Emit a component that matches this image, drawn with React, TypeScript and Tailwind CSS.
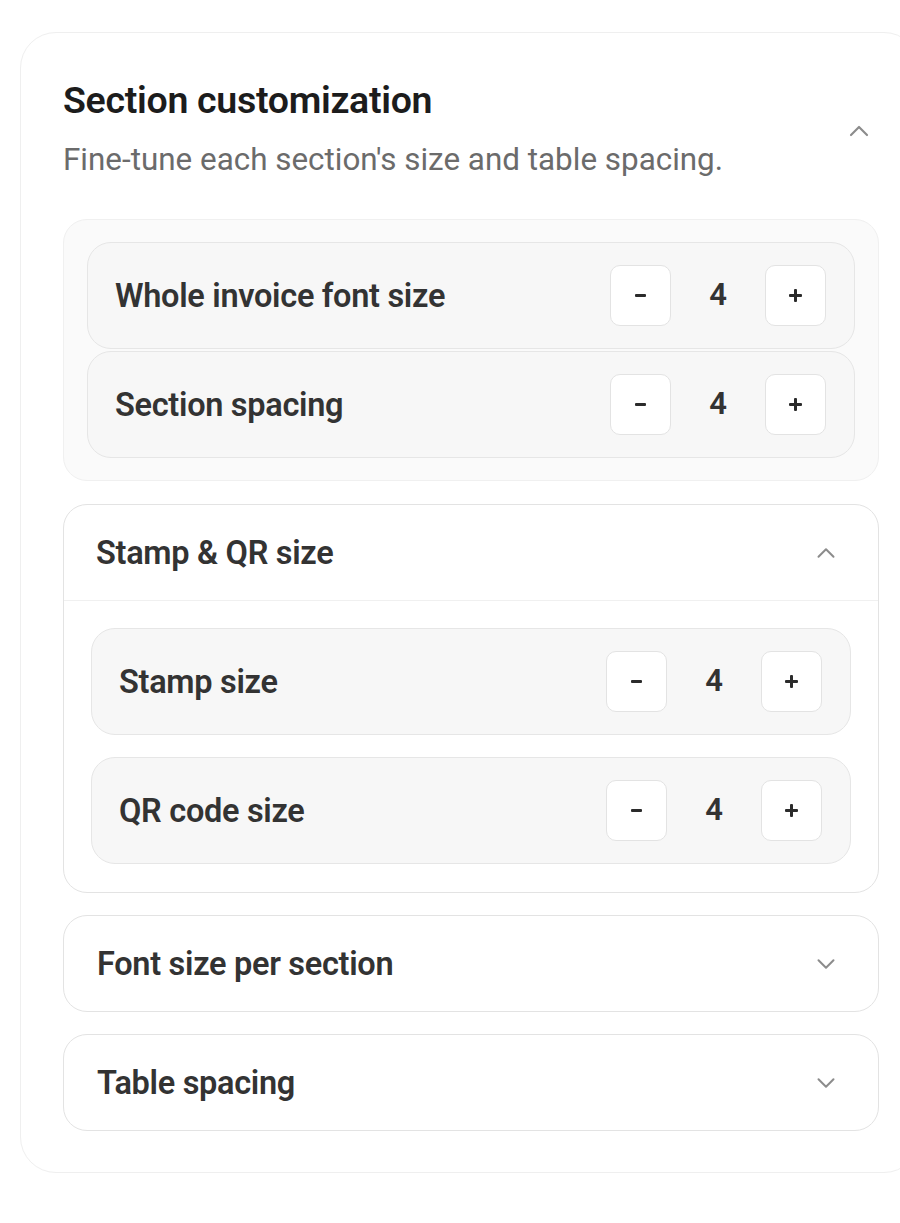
import { ChevronDown, ChevronUp } from "lucide-react";

type Row = { label: string; value: number };

const topRows: Row[] = [
  { label: "Whole invoice font size", value: 4 },
  { label: "Section spacing", value: 4 },
];

const stampRows: Row[] = [
  { label: "Stamp size", value: 4 },
  { label: "QR code size", value: 4 },
];

const StepperRow = ({ row }: { row: Row }) => (
  <div className="flex h-[107px] items-center justify-between rounded-[24px] border border-[#e6e6e6] bg-[#f7f7f7] pl-[27px] pr-[28px]">
    <span className="text-[32.5px] leading-[40px] font-semibold tracking-[-0.3px] text-[#333333]">{row.label}</span>
    <div className="flex items-center">
      <button className="flex h-[61px] w-[61px] items-center justify-center rounded-[10px] border border-[#e3e3e3] bg-white">
        <span className="block h-[3px] w-[11px] rounded-[1px] bg-[#2b2b2b]" />
      </button>
      <span className="w-[94px] text-center text-[31px] font-semibold text-[#333333]">{row.value}</span>
      <button className="relative flex h-[61px] w-[61px] items-center justify-center rounded-[10px] border border-[#e3e3e3] bg-white">
        <span className="block h-[3px] w-[13px] rounded-[1px] bg-[#2b2b2b]" />
        <span className="absolute block h-[13px] w-[3px] rounded-[1px] bg-[#2b2b2b]" />
      </button>
    </div>
  </div>
);

const CollapsedGroup = ({ title }: { title: string }) => (
  <div className="mt-[22px] flex h-[97px] items-center justify-between rounded-[24px] border border-[#e3e3e3] bg-white pl-[33px] pr-[37px]">
    <span className="text-[32.5px] leading-[40px] font-semibold tracking-[-0.3px] text-[#333333]">{title}</span>
    <ChevronDown className="h-[30px] w-[30px] text-[#8c8c8c]" strokeWidth={1.6} />
  </div>
);

export default function App() {
  return (
    <div className="min-h-[1223px] overflow-hidden bg-white pl-5 pt-[32px] font-['Roboto',sans-serif]">
      <div className="w-[900px] rounded-[36px] border border-[#efefef] bg-white pb-[41px] pl-[42px] pr-[40px] pt-[45px]">
        <div className="flex items-center justify-between">
          <div>
            <h2 className="text-[37.5px] leading-[44px] font-semibold tracking-[-0.3px] text-[#1c1c1c]">
              Section customization
            </h2>
            <p className="mt-[18px] text-[31.4px] leading-[40px] text-[#6b6b6b]">
              Fine-tune each section's size and table spacing.
            </p>
          </div>
          <ChevronUp className="mr-[4px] mt-[4px] h-[32px] w-[32px] text-[#8c8c8c]" strokeWidth={1.6} />
        </div>

        <div className="mt-[39px] flex flex-col gap-[2px] rounded-[24px] border border-[#f0f0f0] bg-[#fafafa] px-[23px] py-[22px]">
          {topRows.map((row, i) => (
            <StepperRow key={i} row={row} />
          ))}
        </div>

        <div className="mt-[23px] rounded-[24px] border border-[#e3e3e3] bg-white">
          <div className="flex h-[96px] items-center justify-between border-b border-[#f0f0f0] pl-[32px] pr-[37px]">
            <span className="text-[32.5px] leading-[40px] font-semibold tracking-[-0.3px] text-[#333333]">Stamp &amp; QR size</span>
            <ChevronUp className="h-[30px] w-[30px] text-[#8c8c8c]" strokeWidth={1.6} />
          </div>
          <div className="flex flex-col gap-[22px] px-[27px] pb-[28px] pt-[27px]">
            {stampRows.map((row, i) => (
              <StepperRow key={i} row={row} />
            ))}
          </div>
        </div>

        <CollapsedGroup title="Font size per section" />
        <CollapsedGroup title="Table spacing" />
      </div>
    </div>
  );
}
